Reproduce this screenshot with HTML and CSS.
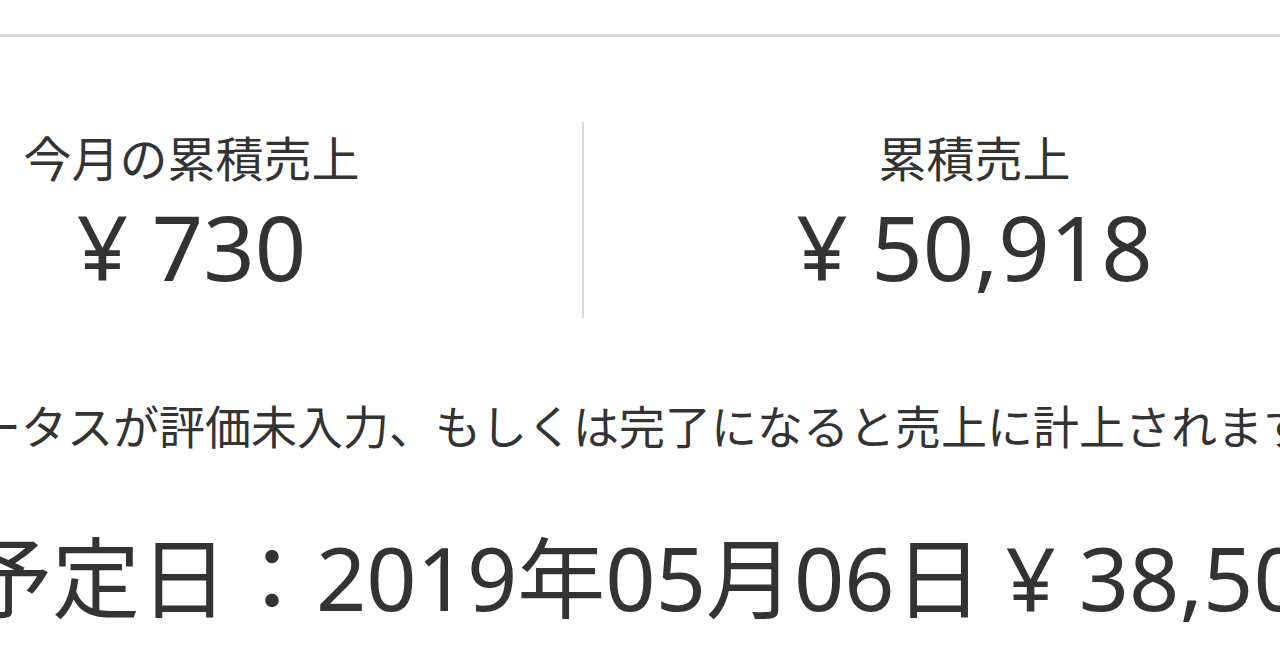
FILE: index.html
```html
<!DOCTYPE html>
<html lang="ja">
<head>
<meta charset="utf-8">
<title>売上</title>
<link rel="stylesheet" href="styles.css">
</head>
<body>
<div class="header"></div>
<main class="content">
  <section class="summary">
    <div class="col">
      <div class="label">今月の累積売上</div>
      <div class="value">¥ 730</div>
    </div>
    <div class="col col-total">
      <div class="label">累積売上</div>
      <div class="value">¥ 50,918</div>
    </div>
  </section>
  <p class="note">ステータスが評価未入力、もしくは完了になると売上に計上されます。</p>
  <p class="payout">振込予定日：2019年05月06日 ¥ 38,500</p>
</main>
</body>
</html>
```

FILE: styles.css
```css
html, body {
  margin: 0;
  padding: 0;
  overflow: hidden;
  background: #fff;
}

body {
  width: 1280px;
  height: 670px;
  color: #333;
  font-family: "Noto Sans", "Noto Sans CJK JP", sans-serif;
}

.header {
  height: 34px;
  border-bottom: 3px solid #d6d6d6;
}

.content {
  width: 1564px;
  margin-left: -199px;
}

.summary {
  display: flex;
  margin-top: 85px;
}

.col {
  flex: 1;
  text-align: center;
  padding: 10px 0 28px;
}

.col-total {
  border-left: 2px solid #d9d9d9;
}

.label {
  font-family: "Noto Sans CJK JP", sans-serif;
  font-size: 48px;
  line-height: 48px;
}

.value {
  margin-top: 22px;
  font-size: 90px;
  line-height: 88px;
}

.note {
  margin: 83px 0 0 82px;
  font-family: "Noto Sans CJK JP", sans-serif;
  font-size: 46px;
  line-height: 46px;
  white-space: nowrap;
}

.payout {
  margin: 86px 0 0 -13px;
  font-size: 88px;
  line-height: 88px;
  white-space: nowrap;
}
```
